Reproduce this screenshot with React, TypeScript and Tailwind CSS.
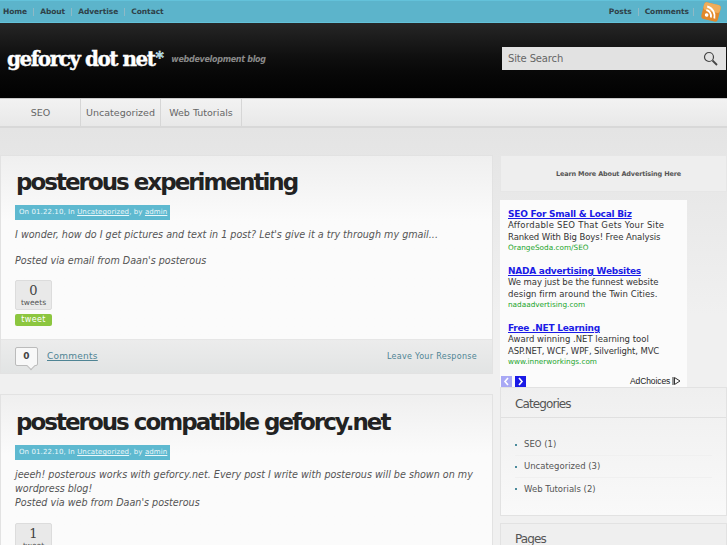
const sans = "font-['DejaVu_Sans',sans-serif]";

function TopLinks({ items }: { items: string[] }) {
  return (
    <div className="flex items-center">
      {items.map((item, i) => (
        <span key={item} className="flex items-center">
          {i > 0 && <span className="mx-[6px] h-[8px] w-px bg-[#8fb9c6]" />}
          <span className="text-[7.5px] font-bold tracking-[-0.05px] text-[#2f4148]">{item}</span>
        </span>
      ))}
    </div>
  );
}

function RssIcon() {
  return (
    <svg width="20" height="20" viewBox="0 0 20 20" className="rotate-[14deg]">
      <rect x="1.5" y="1.5" width="17" height="17" rx="3" fill="#e2882a" />
      <rect x="1.5" y="1.5" width="17" height="8" rx="3" fill="#f0ad5a" />
      <circle cx="6.5" cy="14" r="1.8" fill="#fff" />
      <path d="M5 9.2a6.2 6.2 0 0 1 6.2 6.2M5 5.6a9.8 9.8 0 0 1 9.8 9.8" fill="none" stroke="#fff" strokeWidth="1.9" />
    </svg>
  );
}

function TweetBox({ count, label }: { count: number; label: string }) {
  return (
    <div className="relative flex h-[30px] w-[37px] flex-col items-center rounded-[2px] border border-[#dcdcdc] bg-[#e9e9e9]">
      <span className="mt-[2px] font-['DejaVu_Serif',serif] text-[13px] leading-[15px] text-[#444]">{count}</span>
      <span className="text-[7.5px] leading-[9px] text-[#555]">{label}</span>
    </div>
  );
}

function Meta() {
  return (
    <div className="flex h-[15px] w-[155px] items-center bg-[#5eb9d0] pl-[4px] text-[7px] tracking-[0.1px] whitespace-nowrap text-[#eaf7fa]">
      On 01.22.10, In&nbsp;<span className="underline">Uncategorized</span>, by&nbsp;<span className="underline">admin</span>
    </div>
  );
}

function PostHead({ title, pad }: { title: string; pad: string }) {
  return (
    <h2 className={`${pad} pl-[15px] text-[23px] leading-[30px] font-bold tracking-[-2px] whitespace-nowrap text-[#222]`}>
      {title}
    </h2>
  );
}

function CatItem({ name, last }: { name: string; last?: boolean }) {
  return (
    <li className={`mx-[14px] flex h-[22px] items-center ${last ? "" : "border-b border-[#f0f0f0]"}`}>
      <span className="h-[2px] w-[2px] bg-[#4b8b9c]" />
      <span className="ml-[7px] text-[8.5px] text-[#555]">{name}</span>
    </li>
  );
}

function AdUnit({ title, lines, url, mb }: { title: string; lines: [string, string][]; url: string; mb: string }) {
  return (
    <div className={mb}>
      <div className="text-[9px] leading-[12px] font-bold tracking-[-0.25px] text-[#1a1ae6] underline">{title}</div>
      {lines.map(([text, tracking]) => (
        <div key={text} className={`text-[8.5px] leading-[11.5px] whitespace-nowrap text-[#333] ${tracking}`}>{text}</div>
      ))}
      <div className="text-[7.3px] leading-[10px] text-[#22a52b]">{url}</div>
    </div>
  );
}

export default function App() {
  return (
    <div className={`h-[545px] w-[727px] overflow-hidden bg-[#ededed] ${sans}`}>
      <div className="flex h-[23px] items-center justify-between border-y border-y-[#63c2da] bg-[#5cb4cb] pr-[6px] pl-[3px]">
        <TopLinks items={["Home", "About", "Advertise", "Contact"]} />
        <div className="flex items-center">
          <TopLinks items={["Posts", "Comments"]} />
          <span className="mr-[7px] ml-[4px] h-[8px] w-px bg-[#8fb9c6]" />
          <RssIcon />
        </div>
      </div>

      <header className="flex h-[75px] items-center justify-between bg-gradient-to-b from-[#262626] via-[#0d0d0d] to-[#020202] pr-[1px] pl-[7px]">
        <div className="mb-[4px] flex items-center">
          <span className="font-['DejaVu_Serif',serif] text-[20px] font-bold tracking-[-1.5px] text-white [-webkit-text-stroke:0.4px_white]">
            geforcy dot net<span className="relative -top-[3px] ml-[1px] text-[16px] text-[#5cc0dc]">*</span>
          </span>
          <span className="mt-[3px] ml-[9px] text-[8px] font-bold tracking-[-0.3px] italic text-[#8a8a8a]">webdevelopment blog</span>
        </div>
        <div className="mb-[5px] flex h-[23px] w-[224px] items-center justify-between bg-[#e2e2e2] pr-[8px] pl-[6px]">
          <span className="text-[10px] tracking-[-0.15px] text-[#666]">Site Search</span>
          <svg width="15" height="15" viewBox="0 0 15 15" fill="none" stroke="#444">
            <circle cx="6" cy="6" r="4.5" strokeWidth="1.2" />
            <path d="M9.5 9.5 14 14" strokeWidth="1.8" />
          </svg>
        </div>
      </header>

      <nav className="flex h-[30px] border-t border-b-2 border-t-[#c9c9c9] border-b-[#d8d8d8] bg-gradient-to-b from-[#f2f2f2] to-[#e8e8e8] pl-[1px] text-[9.5px] text-[#666]">
        <span className="flex w-[80px] items-center justify-center border-r border-[#d6d6d6] pt-[2px]">SEO</span>
        <span className="flex w-[80px] items-center justify-center border-r border-[#d6d6d6] pt-[2px]">Uncategorized</span>
        <span className="flex w-[81px] items-center justify-center border-r border-[#d6d6d6] pt-[2px]">Web Tutorials</span>
      </nav>

      <div className="flex gap-[7px] bg-gradient-to-b from-[#e4e4e4] to-[#f0f0f0] to-[40%] pt-[27px]">
        <main className="flex w-[493px] shrink-0 flex-col gap-[20px]">
          <article className="h-[219px] border border-[#e2e2e2] bg-gradient-to-b from-[#efefef] to-[#fbfbfb] to-[30%]">
            <PostHead title="posterous experimenting" pad="pt-[11px]" />
            <div className="mt-[8px] pl-[14px]"><Meta /></div>
            <div className="mt-[8px] pl-[14px] text-[9.6px] leading-[14px] italic text-[#555]">
              <p>I wonder, how do I get pictures and text in 1 post? Let's give it a try through my gmail...</p>
              <p className="mt-[12px]">Posted via email from Daan's posterous</p>
            </div>
            <div className="mt-[12px] pl-[14px]">
              <TweetBox count={0} label="tweets" />
              <div className="mt-[4px] flex h-[12px] w-[37px] items-center justify-center rounded-[2px] bg-[#8cc63f] text-[8px] tracking-[0.4px] text-white">tweet</div>
            </div>
            <div className="mt-[13px] flex h-[34px] items-center justify-between border-t border-[#e6e6e6] bg-gradient-to-b from-[#ececec] to-[#e2e4e4] pr-[15px] pl-[14px]">
              <div className="flex items-center">
                <div className="relative flex h-[19px] w-[23px] items-center justify-center rounded-[2px] border border-[#bbb] bg-[#f8f8f8] text-[9px] font-bold text-[#444]">
                  0
                  <span className="absolute -bottom-[4px] right-[3px] h-[6px] w-[6px] rotate-45 border-r border-b border-[#bbb] bg-[#f8f8f8]" />
                </div>
                <span className="ml-[9px] text-[9px] tracking-[0.25px] text-[#4f8494] underline">Comments</span>
              </div>
              <span className="text-[8px] tracking-[0.3px] text-[#4f8494]">Leave Your Response</span>
            </div>
          </article>

          <article className="h-[200px] border border-[#e2e2e2] bg-gradient-to-b from-[#efefef] to-[#fbfbfb] to-[30%]">
            <PostHead title="posterous compatible geforcy.net" pad="pt-[12px]" />
            <div className="mt-[8px] pl-[14px]"><Meta /></div>
            <div className="mt-[8px] pl-[14px] text-[9.6px] leading-[14.2px] italic text-[#555]">
              <p>jeeeh! posterous works with geforcy.net. Every post I write with posterous will be shown on my<br />wordpress blog!</p>
              <p>Posted via web from Daan's posterous</p>
            </div>
            <div className="mt-[12px] pl-[14px]">
              <TweetBox count={1} label="tweet" />
            </div>
          </article>
        </main>

        <aside className="w-[227px] shrink-0">
          <div className="flex h-[37px] items-center justify-center border border-[#e6e6e6] bg-[#eeeeee] pt-[2px] pl-[10px] text-[6.5px] font-bold tracking-[-0.15px] text-[#555]">
            Learn More About Advertising Here
          </div>
          <div className="mt-[8px] h-[187px] w-[187px] bg-[#fbfbfb] pt-[8px] pl-[8px]">
            <AdUnit title="SEO For Small & Local Biz" lines={[["Affordable SEO That Gets Your Site", "tracking-[0.25px]"], ["Ranked With Big Boys! Free Analysis", "tracking-[-0.07px]"]]} url="OrangeSoda.com/SEO" mb="mb-[12px]" />
            <AdUnit title="NADA advertising Websites" lines={[["We may just be the funnest website", "tracking-[-0.08px]"], ["design firm around the Twin Cities.", "tracking-[0.06px]"]]} url="nadaadvertising.com" mb="mb-[12px]" />
            <AdUnit title="Free .NET Learning" lines={[["Award winning .NET learning tool", "tracking-[0px]"], ["ASP.NET, WCF, WPF, Silverlight, MVC", "tracking-[-0.13px]"]]} url="www.innerworkings.com" mb="mb-[8px]" />
            <div className="-ml-[7px] flex items-center">
              <span className="flex h-[11px] w-[11px] items-center justify-center bg-[#a9a9f5] text-white">
                <svg width="7" height="9" viewBox="0 0 7 9" fill="none" stroke="currentColor" strokeWidth="1.6"><path d="M5 1 2 4.5 5 8" /></svg>
              </span>
              <span className="ml-[3px] flex h-[11px] w-[11px] items-center justify-center bg-[#1a1ae6] text-white">
                <svg width="7" height="9" viewBox="0 0 7 9" fill="none" stroke="currentColor" strokeWidth="1.6"><path d="M2 1 5 4.5 2 8" /></svg>
              </span>
              <span className="ml-[104px] font-['Liberation_Sans',sans-serif] text-[8.5px] tracking-[-0.1px] text-[#222]">AdChoices</span>
              <svg width="9" height="10" viewBox="0 0 9 10" fill="none" stroke="#333" className="ml-[2px]"><path d="M1 1v8M2.5 1.5 8 5 2.5 8.5z" /></svg>
            </div>
          </div>
          <section className="h-[129px] border border-[#e2e2e2] bg-gradient-to-b from-[#efefef] to-[#f9f9f9]">
            <h3 className="h-[30px] border-b border-[#e0e0e0] pt-[7px] pl-[14px] text-[12px] leading-[18px] tracking-[-0.9px] text-[#555]">Categories</h3>
            <ul className="pt-[16px]">
              <CatItem name="SEO (1)" />
              <CatItem name="Uncategorized (3)" />
              <CatItem name="Web Tutorials (2)" last />
            </ul>
          </section>
          <section className="mt-[7px] h-[40px] border border-[#e2e2e2] bg-[#efefef]">
            <h3 className="pt-[6px] pl-[14px] text-[12px] leading-[18px] tracking-[-0.9px] text-[#555]">Pages</h3>
          </section>
        </aside>
      </div>
    </div>
  );
}
